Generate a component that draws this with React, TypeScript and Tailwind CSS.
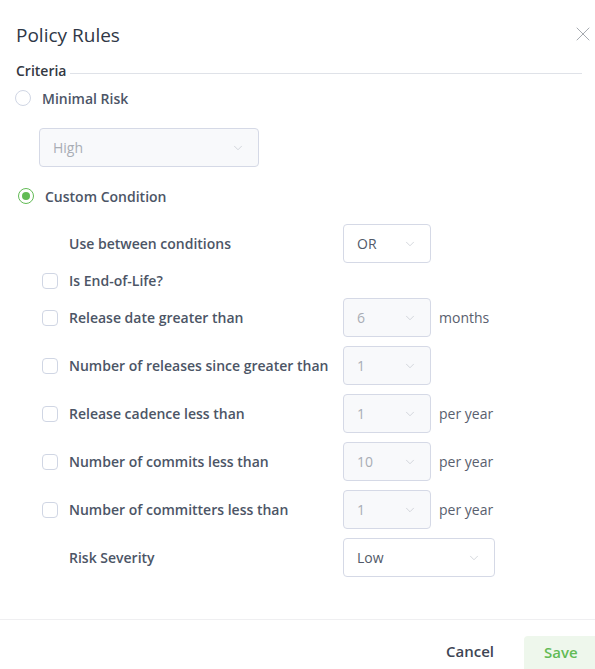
import { ChevronDown, X } from 'lucide-react'

interface SelectProps {
  value: string
  width: string
  disabled?: boolean
}

function FakeSelect({ value, width, disabled }: SelectProps) {
  return (
    <div
      className={`${width} h-[39px] flex items-center justify-between pl-[13px] pr-[13px] rounded border border-[#d5d9e6] text-[14px] ${
        disabled ? 'bg-[#f8f9fb] text-[#a9adb5]' : 'bg-white text-[#525a69]'
      }`}
    >
      <span>{value}</span>
      <ChevronDown size={14} strokeWidth={1.2} className="text-[#c3c7cf]" />
    </div>
  )
}

function Checkbox() {
  return <span className="w-4 h-4 rounded-[4px] border border-[#d0d6e4] bg-white shrink-0" />
}

interface RowProps {
  label: string
  check?: boolean
  select?: React.ReactNode
  unit?: string
  tall?: boolean
}

function Row({ label, check = true, select, unit, tall = true }: RowProps) {
  return (
    <div className={`flex items-center ${tall ? 'h-[39px]' : 'h-[17px]'}`}>
      <div className="w-[27px] flex items-center">{check && <Checkbox />}</div>
      <div className="w-[274px] font-semibold text-[#4c5566]">{label}</div>
      {select}
      {unit && <span className="ml-2 text-[#59606e]">{unit}</span>}
    </div>
  )
}

export default function App() {
  return (
    <div
      className="w-[595px] h-[669px] overflow-hidden bg-white flex flex-col text-[14px]"
      style={{ fontFamily: '"Open Sans", "Liberation Sans", sans-serif' }}
    >
      <div className="flex items-center justify-between pl-4 pr-0 h-[48px] pt-[22px]">
        <h2 className="text-[19px] font-medium text-[#2f3746] leading-6">Policy Rules</h2>
        <X size={24} strokeWidth={0.8} className="text-[#8f949c] -mt-[3px]" />
      </div>

      <div className="flex items-center pl-4 pr-[13px] mt-[10px] h-[24px]">
        <span className="font-semibold text-[#333842]">Criteria</span>
        <div className="flex-1 h-px bg-[#dfe2e8] ml-[3px] mt-[6px]" />
      </div>

      <div className="flex items-center pl-[15px] h-[24px] mt-[4px]">
        <span className="w-4 h-4 rounded-full border border-[#d0d6e4] bg-white" />
        <span className="ml-[11px] font-semibold text-[#4c5566]">Minimal Risk</span>
      </div>

      <div className="pl-[39px] mt-[18px]">
        <FakeSelect value="High" width="w-[220px]" disabled />
      </div>

      <div className="flex items-center pl-[18px] h-[24px] mt-[17px]">
        <span className="w-4 h-4 rounded-full border-[1.5px] border-[#62bb55] bg-white flex items-center justify-center">
          <span className="w-2 h-2 rounded-full bg-[#62bb55]" />
        </span>
        <span className="ml-[11px] font-semibold text-[#4c5566]">Custom Condition</span>
      </div>

      <div className="pl-[42px] mt-[16px] flex flex-col gap-[9px]">
        <Row label="Use between conditions" check={false} select={<FakeSelect value="OR" width="w-[88px]" />} />
        <Row label="Is End-of-Life?" tall={false} />
        <Row label="Release date greater than" select={<FakeSelect value="6" width="w-[88px]" disabled />} unit="months" />
        <Row label="Number of releases since greater than" select={<FakeSelect value="1" width="w-[88px]" disabled />} />
        <Row label="Release cadence less than" select={<FakeSelect value="1" width="w-[88px]" disabled />} unit="per year" />
        <Row label="Number of commits less than" select={<FakeSelect value="10" width="w-[88px]" disabled />} unit="per year" />
        <Row label="Number of committers less than" select={<FakeSelect value="1" width="w-[88px]" disabled />} unit="per year" />
        <Row label="Risk Severity" check={false} select={<FakeSelect value="Low" width="w-[152px]" />} />
      </div>

      <div className="mt-auto border-t border-[#efeff1] h-[50px] flex items-end justify-end">
        <span className="font-semibold text-[15px] text-[#3e4554] mb-[7px] mr-[30px]">Cancel</span>
        <button className="w-[71px] h-[33px] bg-[#eef7ec] rounded-tl-[4px] text-[15px] font-semibold text-[#62bb55] text-left pl-[20px]">
          Save
        </button>
      </div>
    </div>
  )
}
